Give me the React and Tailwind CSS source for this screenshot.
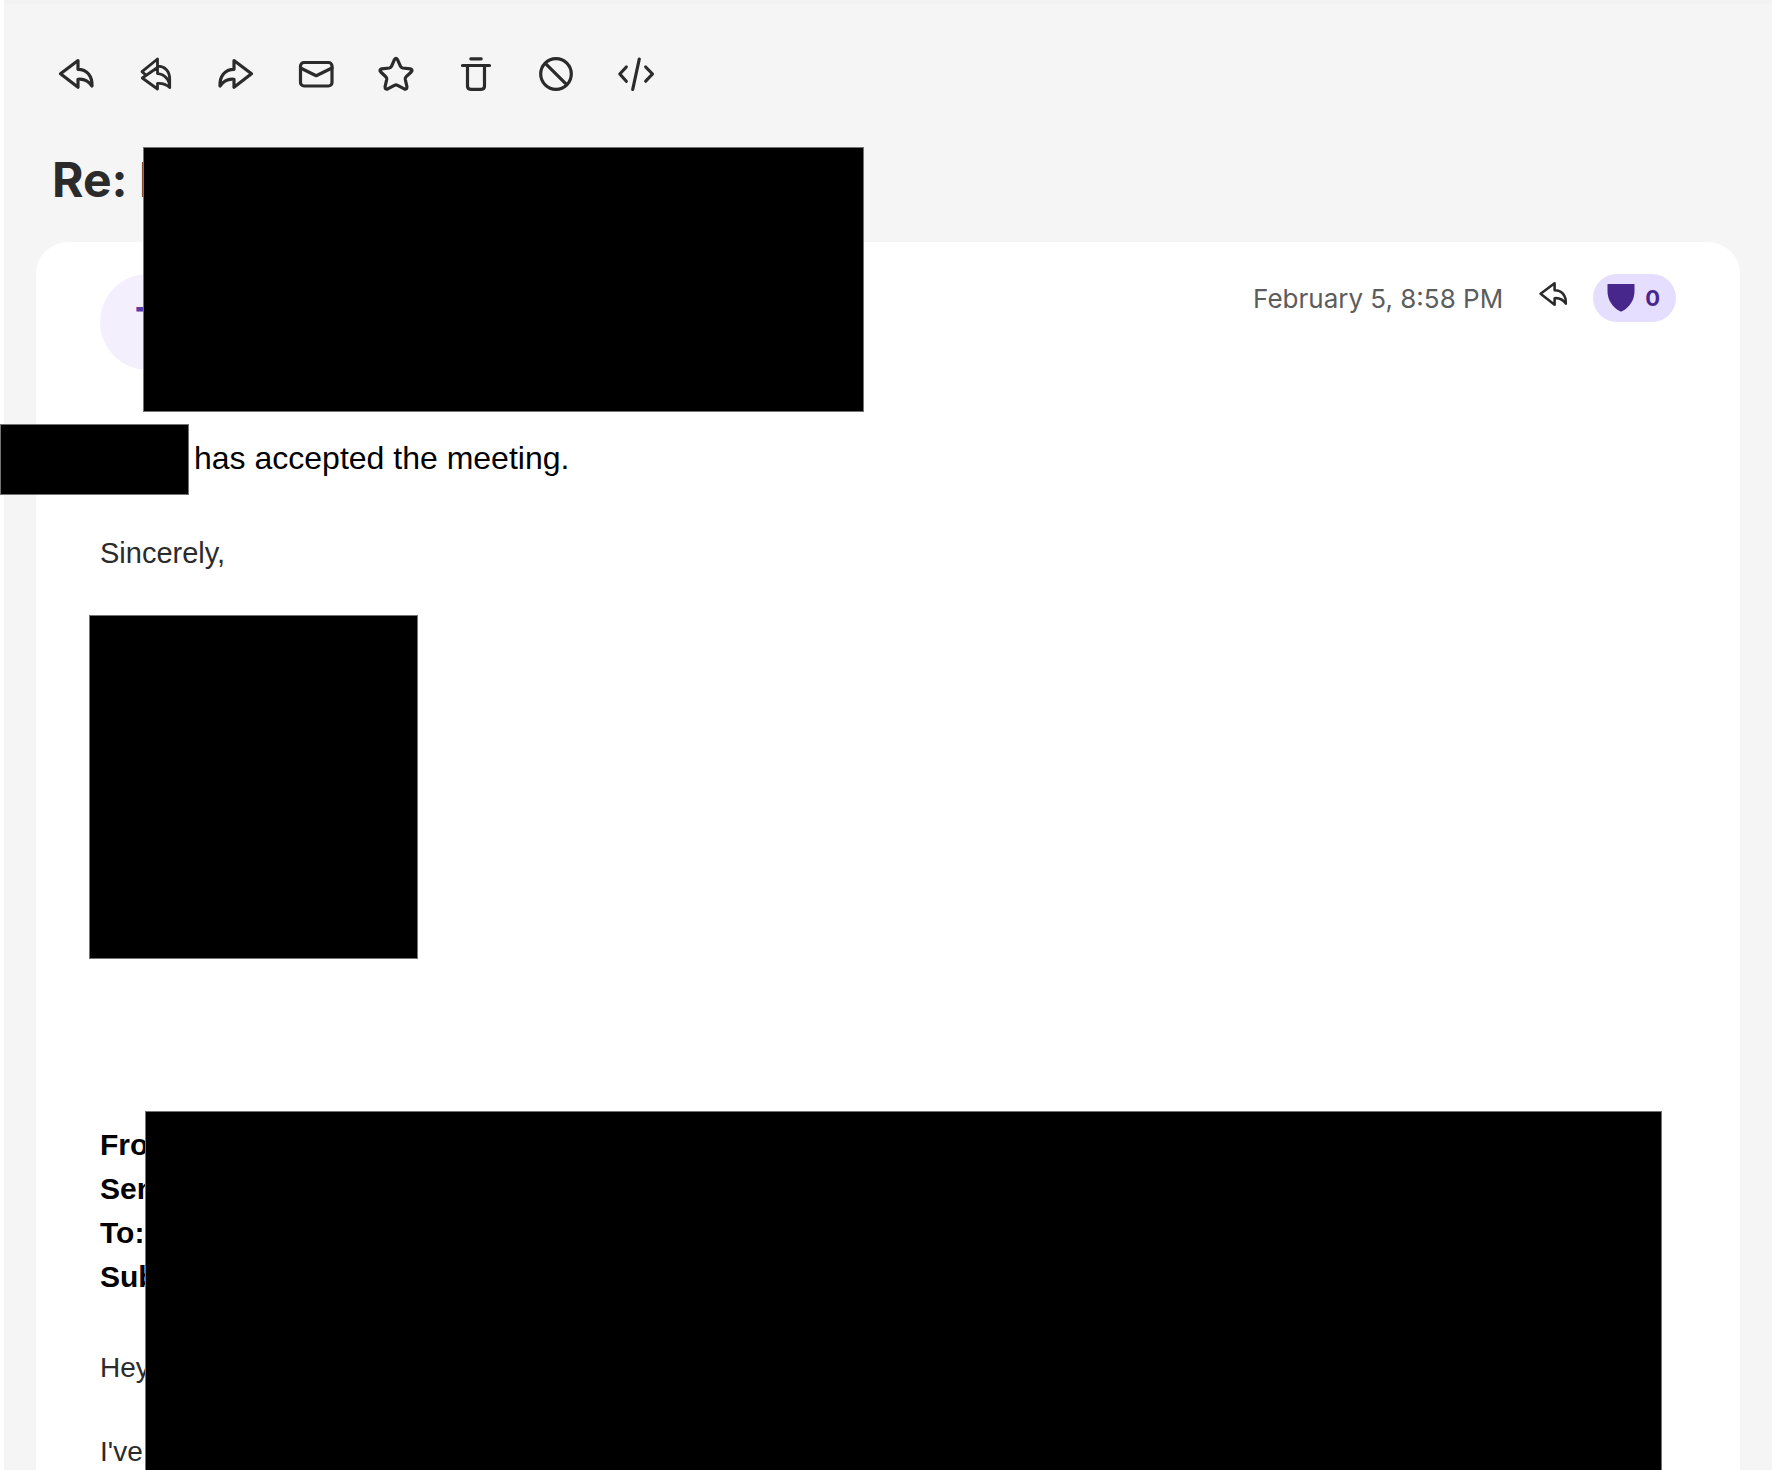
const ICONS = {
  reply: (
    <path d="M22 6.5 4.5 19.8 22 33.3V25.3C28 24.6 32.500 27 36 32C36.500 22 31 15.300 22 15.300Z" />
  ),
  replyAll: (
    <g strokeWidth="2.800">
      <path d="M21.500 13.500 6.300 24 21.500 35V29.500C26.500 29 30.500 30.800 33.700 33.500C33.700 25.500 28.500 20 21.500 19.600Z" />
      <path d="M9.500 20.800 6 17.600 21.500 5V12.200C28.500 12 33.700 17 33.700 25V33" />
    </g>
  ),
  forward: (
    <path d="M18 6.500 35.500 19.800 18 33.300V25.300C12 24.600 7.500 27 4 32C3.500 22 9 15.300 18 15.300Z" />
  ),
  mail: (
    <>
      <rect x="4.500" y="8.500" width="31.500" height="23.500" rx="3.500" />
      <path d="M4.500 14 20.200 21.700 36 14" />
    </>
  ),
  star: (
    <path d="M18.400 5.600Q20 3.200 21.500 5.600L24.400 12.200Q25 13.700 26.600 14L34.400 14.900Q37.200 15.700 35.200 18L30.200 22.700Q29 23.800 29.300 25.500L30.900 32.700Q31 35.800 28.300 34.900L21.600 31.300Q20 30.400 18.400 31.300L11.700 34.900Q9 35.800 9.100 32.700L10.700 25.500Q11 23.800 9.800 22.700L4.800 18Q2.800 15.700 5.600 14.900L13.400 14Q15 13.700 15.600 12.200Z" />
  ),
  trash: (
    <>
      <path d="M14.800 4.800H25.200M6.500 11.500H33.500" />
      <path d="M11.500 11.500V32Q11.500 35.300 14.800 35.300H25.200Q28.500 35.300 28.500 32V11.500" />
    </>
  ),
  block: (
    <>
      <circle cx="20" cy="20" r="15.300" />
      <path d="M9.800 9.800 30.200 30.200" />
    </>
  ),
  code: (
    <path d="M10.300 13 3.800 20 10.300 27.200M23.300 5 16.700 35.500M29.700 13 36.500 20 29.700 27.200" />
  ),
};

const ACTIONS = [
  ["reply", "Reply"],
  ["replyAll", "Reply all"],
  ["forward", "Forward"],
  ["mail", "Mark as unread"],
  ["star", "Star"],
  ["trash", "Delete"],
  ["block", "Block sender"],
  ["code", "View source"],
];

function Icon({ name, className = "size-10" }) {
  return (
    <svg
      viewBox="0 0 40 40"
      className={className}
      fill="none"
      stroke="currentColor"
      strokeWidth="3.200"
      strokeLinecap="round"
      strokeLinejoin="round"
      aria-hidden="true"
    >
      {ICONS[name]}
    </svg>
  );
}

function Redacted({ className }) {
  return <div className={`border border-neutral-500 bg-black ${className}`} />;
}

export default function App() {
  return (
    <div className="h-screen overflow-hidden bg-white pl-1 font-['Liberation_Sans',Arial,sans-serif] text-[#2b2b2b]">
      <main className="flex h-full flex-col border-t-4 border-t-[#f2f2f2] bg-[#f5f5f5]">
        <nav aria-label="Message actions" className="flex gap-8 px-12 pt-[46px]">
          {ACTIONS.map(([name, label]) => (
            <button key={name} type="button" aria-label={label} className="flex size-12 items-center justify-center">
              <Icon name={name} />
            </button>
          ))}
        </nav>

        <header className="relative z-10 px-12 pt-[52px] pb-8">
          <h1 className="font-['Inter',sans-serif] text-5xl leading-[60px] font-bold">Re: I</h1>
          <Redacted className="absolute top-[49px] left-[139px] h-[265px] w-[721px]" />
        </header>

        <article className="relative mx-8 flex-1 rounded-t-[32px] bg-white px-16 pt-8">
          <div className="flex h-24 items-start justify-between">
            <div className="flex size-24 items-center justify-center rounded-full bg-[#f4effd] font-['Inter',sans-serif] text-[40px] font-semibold text-[#5b3cb0]">
              T
            </div>
            <div className="flex h-12 items-center">
              <time className="font-['Inter',sans-serif] text-[26px] text-[#5c5c5c]">February 5, 8:58 PM</time>
              <button type="button" aria-label="Reply" className="mr-6 ml-[34px] flex h-12 items-start pt-1">
                <Icon name="reply" className="size-8" />
              </button>
              <button
                type="button"
                className="flex h-12 items-center gap-[10px] rounded-full bg-[#e5defe] pr-4 pl-[14px] font-['Inter',sans-serif] text-[22px] font-bold text-[#47278b]"
              >
                <svg viewBox="0 0 28 28" className="size-7" fill="currentColor" aria-hidden="true">
                  <path d="M1 0H27Q27.500 0 27.500 .5V7C27.500 16 22.500 23.500 15 27.300Q14 27.700 13 27.300C5.500 23.500 .5 16 .5 7V.5Q.5 0 1 0Z" />
                </svg>
                0
              </button>
            </div>
          </div>

          <div className="mt-[54px] -ml-[100px] flex items-center gap-[5px] text-[32px] text-black">
            <Redacted className="h-[71px] w-[189px]" />
            <p className="pb-1">has accepted the meeting.</p>
          </div>

          <p className="mt-9 text-[29px] leading-[44px]">Sincerely,</p>
          <Redacted className="mt-10 -ml-[11px] h-[344px] w-[329px]" />

          <div className="relative mt-[164px]">
            <dl className="text-[30px] leading-[44px] font-bold text-black">
              <dt>From:</dt>
              <dt>Sent:</dt>
              <dt>To:</dt>
              <dt>Subject:</dt>
            </dl>
            <p className="mt-12 text-[28px] leading-[42px]">Hey</p>
            <p className="mt-[42px] text-[28px] leading-[42px]">I've</p>
            <Redacted className="absolute -top-3 right-[14px] left-[45px] h-[400px]" />
          </div>
        </article>
      </main>
    </div>
  );
}
